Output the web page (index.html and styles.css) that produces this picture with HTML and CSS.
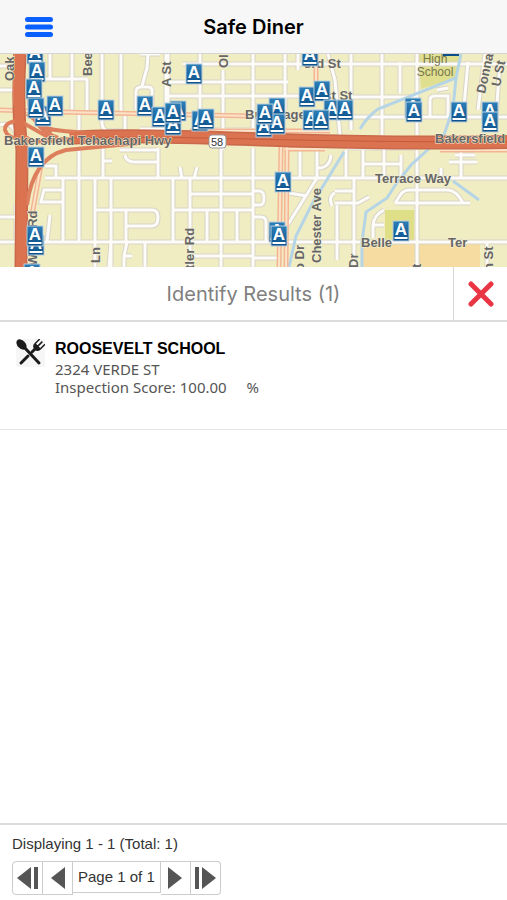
FILE: index.html
```html
<!DOCTYPE html>
<html lang="en">
<head>
    <meta charset="UTF-8">
    <meta name="viewport" content="width=device-width, initial-scale=1.0">
    <title>Safe Diner</title>
    <link rel="stylesheet" href="styles.css">
</head>
<body>
    <header class="topbar">
        <button type="button" class="menu-button" aria-label="Menu">
            <svg width="28" height="20" viewBox="0 0 28 20">
                <path d="M2.500 2.500H25.500M2.500 10H25.500M2.500 17.500H25.500" stroke="#0a60ff" stroke-width="5" stroke-linecap="round"/>
            </svg>
        </button>
        <h1>Safe Diner</h1>
    </header>

    <svg class="map" viewBox="0 54 507 213" preserveAspectRatio="xMidYMid slice" role="img" aria-label="Map of inspections">
        <defs>
            <linearGradient id="pin-fill" x1="0" y1="0" x2="0" y2="1">
                <stop offset="0" stop-color="#2d7fb8"/>
                <stop offset="1" stop-color="#0b4f88"/>
            </linearGradient>
            <symbol id="pin" viewBox="0 0 18 22" overflow="visible">
                <rect x="1" y="1" width="16" height="20" fill="url(#pin-fill)" stroke="#b9cfdc" stroke-width="1"/>
                <text x="9" y="15" class="pin-letter">A</text>
                <path d="M2.500 18H15.500" stroke="#fff" stroke-width="2"/>
            </symbol>
            <g id="streets">
                <!-- north of the freeway -->
                <path d="M50 54V79M45 79H88M87 79V112M72 54V110M79 112V135M102 54V124Q103 131 109 131H125V113M121 54V112M148 54L147 68L142 86M140 54H160M136 110V92Q136 87 141 87H149Q153 88 152 94V110M140 129H166M166 54V130"/>
                <path d="M168 54V130M200 54V135M223 70V150M253 54V135M285 54V110M298 54V70M328 54L335 80M183 64H507M165 82H288M165 96H335M195 130H253M253 116H300"/>
                <path d="M351 54V130M382 54V135M417 54V135M400 62V93M350 97H417M350 117H507M430 117V100Q430 96 435 96H448V117M437 90L448 88M468 62L463 117M485 54L478 110M500 62L496 117M335 80L340 135"/>
                <path d="M0 125Q14 120 17 140M0 66H16M0 90H14"/>
                <!-- south of the freeway -->
                <path d="M45 178H507M0 242H507M79 150V242M63 178V242M63 190H44L41 202H63M95 178V267M111 178V267M95 210H152Q158 210 158 217Q158 226 152 226H127M126 210V242M145 242V267M111 242L109 267M127 242L124 256V267M124 256H132M16 204V242M0 217H16M50 215L47 242M103 148V178M45 166H56V178M103 161H112M158 148V178M125 155Q126 162 134 162H158M120 150H158"/>
                <path d="M173 179V242M190 179V267M221 148V267M253 148V267M300 148V179M317 148V178M190 194H253M173 210H253M207 210V242M237 210V242M190 256H253M253 258H278M253 191H260Q264 192 264 198Q264 205 260 205H253M253 217H261Q266 217 266 222V242M317 178L287 226M289 193L307 196M318 168Q330 168 331 155M180 167L182 179M197 167L194 179M335 193Q328 196 332 206"/>
                <path d="M346 150V179M363 150V179M417 150V267M401 155V178M461 148V178M363 164H402M449 162H477M441 168V178M455 155H475M335 191H355M335 203H358L369 197M337 205V260M354 179V267M395 203L401 194Q404 190 410 190H448Q457 191 463 203M395 203H470M384 210Q374 215 373 225V238M373 225H384M487 242V267M346 148H415M384 148V178"/>
            </g>
            <path id="avenues" d="M0 110L60 112L250 116M280 116M316 54V84M190 131H330M281 146L279 267M287 146L286 267M285 149H325M440 150H507M41 165L32 215"/>
        </defs>

        <rect x="0" y="54" width="507" height="213" fill="#f1edc3"/>
        <path d="M418 54H461L456 78L421 89Z" fill="#dfdf8f"/>
        <path d="M385 210H414V241H385Z" fill="#dfdf87"/>
        <path d="M362 243H480V267H362Z" fill="#f6dca0"/>

        <use href="#streets" class="street-casing"/>
        <use href="#streets" class="street"/>

        <g class="river">
            <path d="M461 54L456 78L378 109Q367 117 360 129"/>
            <path d="M456 78L453 108L444 135L411 165L396 184L387 198L366 212L362 242V267"/>
            <path d="M344 152L312 204L296 236L289 267"/>
            <path d="M453 181L479 200"/>
        </g>

        <use href="#avenues" class="avenue-casing"/>
        <use href="#avenues" class="avenue"/>

        <g class="freeway-casing">
            <path d="M20 54Q17 110 22 150L21 267" stroke-width="13"/>
            <path d="M70 138Q110 134 250 139T507 142" stroke-width="14"/>
        </g>
        <g class="ramp">
            <path d="M15 54V90Q13 112 25 124L48 137M29 98Q30 128 58 138M24 120Q4 121 5 130Q8 140 24 138M20 134L34 142M27 205Q33 158 66 150L140 143M27 114L52 132"/>
            <path d="M45 128Q75 135 200 137M24 143Q60 139 120 140"/>
        </g>
        <g class="freeway">
            <path d="M20 54Q17 110 22 150L21 267" stroke-width="10"/>
            <path d="M70 138Q110 134 250 139T507 142" stroke-width="11"/>
        </g>
        <path class="freeway-line" d="M60 138Q130 136 250 139T507 142"/>

        <rect x="209" y="135" width="17" height="13" rx="3" fill="#fff" stroke="#999"/>
        <text x="217" y="146" class="route">58</text>

        <g class="road-name">
            <text x="4" y="145">Bakersfield Tehachapi Hwy</text>
            <text x="435" y="143">Bakersfield</text>
            <text x="375" y="183">Terrace Way</text>
            <text x="361" y="247">Belle</text>
            <text x="448" y="247">Ter</text>
            <text x="245" y="119">Brundage</text>
            <text x="304" y="68">3rd St</text>
            <text x="317" y="100">1st St</text>
            <text transform="translate(14 81) rotate(-90)">Oak</text>
            <text transform="translate(92 76) rotate(-90)">Bee</text>
            <text transform="translate(171 87) rotate(-90)">A St</text>
            <text transform="translate(228 68) rotate(-90)">Ol</text>
            <text transform="translate(485 94) rotate(-78)">Donna</text>
            <text transform="translate(500 87) rotate(-78)">U St</text>
            <text transform="translate(37 266) rotate(-90)">Wible Rd</text>
            <text transform="translate(100 263) rotate(-90)">Ln</text>
            <text transform="translate(194 269) rotate(-90)">tler Rd</text>
            <text transform="translate(304 271) rotate(-90)">o Dr</text>
            <text transform="translate(321 263) rotate(-90)">Chester Ave</text>
            <text transform="translate(358 268) rotate(-90)">Dr</text>
            <text transform="translate(421 268) rotate(-90)">t</text>
            <text transform="translate(493 271) rotate(-90)">n St</text>
        </g>
        <g class="place-name">
            <text x="435" y="63">High</text>
            <text x="435" y="76">School</text>
        </g>

        <g>
            <use href="#pin" x="26" y="43" width="18" height="22"/>
            <use href="#pin" x="28" y="61" width="18" height="22"/>
            <use href="#pin" x="34" y="105" width="18" height="22"/>
            <use href="#pin" x="25" y="78" width="18" height="22"/>
            <use href="#pin" x="46" y="95" width="18" height="22"/>
            <use href="#pin" x="27" y="97" width="18" height="22"/>
            <use href="#pin" x="97" y="99" width="18" height="22"/>
            <use href="#pin" x="136" y="95" width="18" height="22"/>
            <use href="#pin" x="151" y="106" width="18" height="22"/>
            <use href="#pin" x="164" y="114" width="18" height="22"/>
            <use href="#pin" x="169" y="100" width="18" height="22"/>
            <use href="#pin" x="164" y="102" width="18" height="22"/>
            <use href="#pin" x="185" y="63" width="18" height="22"/>
            <use href="#pin" x="191" y="110" width="18" height="22"/>
            <use href="#pin" x="197" y="108" width="18" height="22"/>
            <use href="#pin" x="268" y="97" width="18" height="22"/>
            <use href="#pin" x="255" y="116" width="18" height="22"/>
            <use href="#pin" x="268" y="113" width="18" height="22"/>
            <use href="#pin" x="256" y="103" width="18" height="22"/>
            <use href="#pin" x="301" y="45" width="18" height="22"/>
            <use href="#pin" x="298" y="86" width="18" height="22"/>
            <use href="#pin" x="313" y="80" width="18" height="22"/>
            <use href="#pin" x="302" y="109" width="18" height="22"/>
            <use href="#pin" x="323" y="99" width="18" height="22"/>
            <use href="#pin" x="312" y="109" width="18" height="22"/>
            <use href="#pin" x="336" y="99" width="18" height="22"/>
            <use href="#pin" x="404" y="97" width="18" height="22"/>
            <use href="#pin" x="405" y="101" width="18" height="22"/>
            <use href="#pin" x="450" y="101" width="18" height="22"/>
            <use href="#pin" x="481" y="101" width="18" height="22"/>
            <use href="#pin" x="481" y="111" width="18" height="22"/>
            <use href="#pin" x="27" y="146" width="18" height="22"/>
            <use href="#pin" x="274" y="171" width="18" height="22"/>
            <use href="#pin" x="268" y="221" width="18" height="22"/>
            <use href="#pin" x="270" y="225" width="18" height="22"/>
            <use href="#pin" x="392" y="220" width="18" height="22"/>
            <use href="#pin" x="27" y="234" width="18" height="22"/>
            <use href="#pin" x="26" y="225" width="18" height="22"/>
            <use href="#pin" x="23" y="263" width="18" height="22"/>
            <rect x="443" y="52" width="16" height="4" fill="#0b4f88"/>
        </g>
    </svg>

    <main class="results">
        <div class="results-bar">
            <h2>Identify Results (1)</h2>
            <button type="button" class="close-button" aria-label="Close results">
                <svg width="26" height="26" viewBox="0 0 26 26">
                    <path d="M3 3L23 23M23 3L3 23" stroke="#e93544" stroke-width="5" stroke-linecap="round"/>
                </svg>
            </button>
        </div>

        <ul class="result-list">
            <li class="result">
                <svg class="result-icon" width="29" height="28" viewBox="0 0 29 28">
                    <rect width="29" height="28" fill="#f6f6f6"/>
                    <g fill="none" stroke="#1b1b1b" stroke-linecap="round">
                        <path d="M8 8L23 24" stroke-width="3"/>
                        <path d="M5 24L12 17M16 13L20 9" stroke-width="3"/>
                    </g>
                    <ellipse cx="5.500" cy="5.500" rx="6" ry="4" transform="rotate(46 5.500 5.500)" fill="#1b1b1b"/>
                    <path d="M-4.500 -9V-3Q-4.500 2 0 2Q4.500 2 4.500 -3V-9H3V-3H0.750V-9H-0.750V-3H-3V-9Z" transform="translate(20 9) rotate(45)" fill="#1b1b1b"/>
                </svg>
                <div class="result-text">
                    <h3>ROOSEVELT SCHOOL</h3>
                    <p>2324 VERDE ST</p>
                    <p>Inspection Score: 100.00 <span class="unit">%</span></p>
                </div>
            </li>
        </ul>
    </main>

    <footer class="footer">
        <p>Displaying 1 - 1 (Total: 1)</p>
        <nav class="pager" aria-label="Pages">
            <button type="button" class="first" aria-label="First page">
                <svg width="22" height="22" viewBox="0 0 22 22"><path d="M14 0V22L0 11ZM17 0H21V22H17Z" fill="#555"/></svg>
            </button>
            <button type="button" aria-label="Previous page">
                <svg width="14" height="22" viewBox="0 0 14 22"><path d="M14 0V22L0 11Z" fill="#555"/></svg>
            </button>
            <span class="page">Page 1 of 1</span>
            <button type="button" aria-label="Next page">
                <svg width="14" height="22" viewBox="0 0 14 22"><path d="M0 0V22L14 11Z" fill="#555"/></svg>
            </button>
            <button type="button" class="last" aria-label="Last page">
                <svg width="22" height="22" viewBox="0 0 22 22"><path d="M8 0V22L22 11ZM1 0H5V22H1Z" fill="#555"/></svg>
            </button>
        </nav>
    </footer>
</body>
</html>
```
FILE: styles.css
```css
* {
    box-sizing: border-box;
}
body {
    display: flex;
    flex-direction: column;
    min-height: 100vh;
    margin: 0;
    background-color: #fff;
    font-family: "Liberation Sans", Arial, sans-serif;
    color: #333;
}
h1, h2, h3, p, ul {
    margin: 0;
    padding: 0;
}
button {
    display: flex;
    align-items: center;
    justify-content: center;
    padding: 0;
    border: 0;
    background: none;
}
.topbar {
    display: grid;
    grid-template-columns: 54px 1fr 54px;
    align-items: center;
    height: 54px;
    padding-top: 1px;
    background-color: #f7f7f7;
    border-bottom: 1px solid #d5d5d5;
}
.menu-button {
    justify-content: flex-end;
    padding-right: 1px;
}
.topbar h1 {
    font-family: Inter, sans-serif;
    font-size: 20px;
    font-weight: 600;
    line-height: 24px;
    text-align: center;
    color: #000;
}

/* map */
.map {
    display: block;
    width: 100%;
    height: 213px;
}
.street-casing, .street, .river, .avenue, .avenue-casing, .ramp, .freeway, .freeway-casing, .freeway-line {
    fill: none;
}
.street-casing {
    stroke: #d8d4c8;
    stroke-width: 5;
}
.street {
    stroke: #fdfcf8;
    stroke-width: 3;
}
.river {
    stroke: #b5d5e6;
    stroke-width: 3;
}
.avenue-casing {
    stroke: #f3b592;
    stroke-width: 5;
}
.avenue {
    stroke: #fbe3c8;
    stroke-width: 2;
}
.freeway-casing {
    stroke: #c9694b;
}
.ramp {
    stroke: #dd7e5c;
    stroke-width: 4;
}
.freeway {
    stroke: #dc7350;
}
.freeway-line {
    stroke: #c45c3c;
    stroke-width: 1;
}
.road-name {
    font-size: 13px;
    font-weight: bold;
    fill: #666;
    stroke: #f5f1d4;
    stroke-width: 1px;
    paint-order: stroke;
}
.place-name {
    font-size: 12px;
    fill: #77774d;
    text-anchor: middle;
}
.route {
    font-size: 11px;
    fill: #333;
    text-anchor: middle;
}
.pin-letter {
    font-size: 17px;
    font-weight: bold;
    fill: #fff;
    text-anchor: middle;
}

/* results */
.results {
    flex: 1;
}
.results-bar {
    display: grid;
    grid-template-columns: 54px 1fr 54px;
    align-items: center;
    height: 55px;
    border-bottom: 2px solid #dcdcdc;
}
.results-bar h2 {
    grid-column: 2;
    font-family: Inter, sans-serif;
    font-size: 20px;
    font-weight: normal;
    line-height: 24px;
    text-align: center;
    color: #808080;
}
.close-button {
    align-self: stretch;
    border-left: 1px solid #d8d8d8;
}
.result-list {
    list-style: none;
}
.result {
    display: flex;
    gap: 10px;
    min-height: 108px;
    padding: 17px 16px;
    border-bottom: 1px solid #e4e4e4;
}
.result-icon {
    flex: none;
}
.result-text {
    font-family: "Noto Sans", sans-serif;
    font-size: 15px;
    line-height: 18px;
    color: #555;
}
.result-text h3 {
    margin-bottom: 1px;
    font-family: "Liberation Sans", Arial, sans-serif;
    font-size: 16px;
    line-height: 20px;
    color: #000;
}
.unit {
    margin-left: 16px;
}

/* footer */
.footer {
    padding: 9px 12px 5px;
    border-top: 2px solid #dcdcdc;
    font-size: 15px;
    line-height: 20px;
}
.pager {
    display: flex;
    align-items: flex-start;
    margin-top: 7px;
}
.pager button {
    width: 30px;
    height: 34px;
    border: 1px solid #ccc;
    border-left-width: 0;
}
.pager .first {
    width: 31px;
    border-left-width: 1px;
    border-radius: 4px 0 0 4px;
}
.pager .last {
    border-radius: 0 4px 4px 0;
}
.page {
    padding: 5px;
    border: 1px solid #ccc;
    border-left: 0;
}
```
